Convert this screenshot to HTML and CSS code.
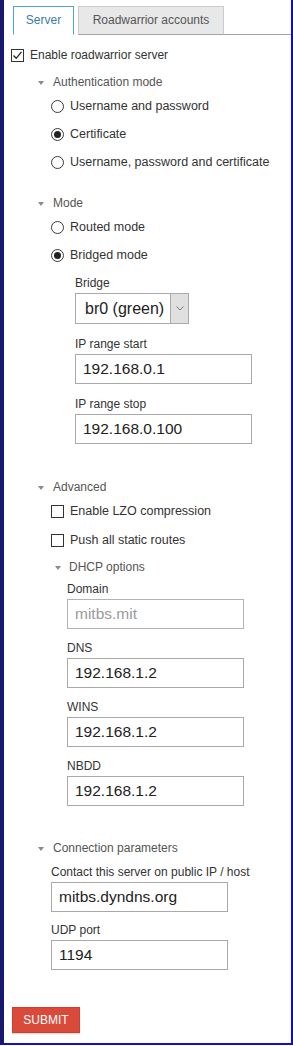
FILE: index.html
```html
<!DOCTYPE html>
<html>
<head>
<meta charset="utf-8">
<link rel="stylesheet" href="styles.css">
</head>
<body>
<div class="frame">
  <div class="tabbar">
    <div class="tab active">Server</div>
    <div class="tab">Roadwarrior accounts</div>
    <div class="tab-fill"></div>
  </div>

  <div class="content">
    <div class="row enable">
      <span class="cb checked"><svg width="11" height="11" viewBox="0 0 11 11"><polyline points="1.5,5.5 4.2,8.3 9.5,1.8" fill="none" stroke="#222" stroke-width="1.3"/></svg></span>
      <span>Enable roadwarrior server</span>
    </div>

    <section class="group g-auth">
      <div class="head"><span class="tri"></span>Authentication mode</div>
      <div class="opts">
        <div class="row opt"><span class="radio"></span>Username and password</div>
        <div class="row opt"><span class="radio on"></span>Certificate</div>
        <div class="row opt"><span class="radio"></span>Username, password and certificate</div>
      </div>
    </section>

    <section class="group g-mode">
      <div class="head"><span class="tri"></span>Mode</div>
      <div class="opts">
        <div class="row opt"><span class="radio"></span>Routed mode</div>
        <div class="row opt"><span class="radio on"></span>Bridged mode</div>
      </div>
      <div class="fields f-bridge">
        <div class="field">
          <div class="lbl">Bridge</div>
          <div class="select">
            <span class="sel-text">br0 (green)</span>
            <span class="sel-arrow"><svg width="8" height="5" viewBox="0 0 8 5"><polyline points="0.5,0.5 4,4 7.5,0.5" fill="none" stroke="#777" stroke-width="1"/></svg></span>
          </div>
        </div>
        <div class="field">
          <div class="lbl">IP range start</div>
          <input class="txt" type="text" value="192.168.0.1">
        </div>
        <div class="field">
          <div class="lbl">IP range stop</div>
          <input class="txt" type="text" value="192.168.0.100">
        </div>
      </div>
    </section>

    <section class="group g-adv">
      <div class="head"><span class="tri"></span>Advanced</div>
      <div class="opts">
        <div class="row opt"><span class="cb"></span>Enable LZO compression</div>
        <div class="row opt"><span class="cb"></span>Push all static routes</div>
      </div>
      <div class="sub g-dhcp">
        <div class="head"><span class="tri"></span>DHCP options</div>
        <div class="fields f-dhcp">
          <div class="field">
            <div class="lbl">Domain</div>
            <input class="txt disabled" type="text" value="mitbs.mit" disabled>
          </div>
          <div class="field">
            <div class="lbl">DNS</div>
            <input class="txt" type="text" value="192.168.1.2">
          </div>
          <div class="field">
            <div class="lbl">WINS</div>
            <input class="txt" type="text" value="192.168.1.2">
          </div>
          <div class="field">
            <div class="lbl">NBDD</div>
            <input class="txt" type="text" value="192.168.1.2">
          </div>
        </div>
      </div>
    </section>

    <section class="group g-conn">
      <div class="head"><span class="tri"></span>Connection parameters</div>
      <div class="fields f-conn">
        <div class="field">
          <div class="lbl">Contact this server on public IP / host</div>
          <input class="txt" type="text" value="mitbs.dyndns.org">
        </div>
        <div class="field">
          <div class="lbl">UDP port</div>
          <input class="txt" type="text" value="1194">
        </div>
      </div>
    </section>

    <button class="submit" type="button">SUBMIT</button>
  </div>
</div>
</body>
</html>
```

FILE: styles.css
```css
html, body {
  margin: 0;
  padding: 0;
  background: #ffffff;
}

body {
  font-family: "Liberation Sans", Arial, sans-serif;
  font-size: 12px;
  color: #333333;
}

.frame {
  width: 293px;
  height: 1045px;
  box-sizing: border-box;
  border-left: 4px solid #18186e;
  border-right: 2px solid #0c0cd2;
  border-bottom: 2px solid #1212c4;
  background: #ffffff;
  overflow: hidden;
}

/* tabs */
.tabbar {
  display: flex;
  align-items: flex-end;
  margin-top: 6px;
  margin-left: 9px;
  height: 29px;
}

.tab {
  box-sizing: border-box;
  height: 29px;
  line-height: 27px;
  font-size: 12px;
  text-align: center;
}

.tab.active {
  width: 61px;
  border: 1px solid #4aa6cc;
  border-bottom: 1px solid #ffffff;
  color: #3d7ca6;
}

.tab:not(.active) {
  width: 146px;
  margin-left: 4px;
  background: #e8e8e8;
  border: 1px solid #cccccc;
  border-bottom: 1px solid #a3a3a3;
  color: #555555;
}

.tab-fill {
  flex: 1;
  height: 29px;
  box-sizing: border-box;
  border-bottom: 1px solid #a3a3a3;
}

/* content */
.content {
  display: flex;
  flex-direction: column;
  align-items: flex-start;
  padding-left: 7px;
}

.row {
  display: flex;
  align-items: center;
  height: 20px;
  line-height: 20px;
  white-space: nowrap;
}

.enable {
  margin-top: 10px;
  gap: 6px;
  font-size: 12px;
}

.cb {
  box-sizing: border-box;
  width: 13px;
  height: 13px;
  border: 1px solid #333333;
  background: #ffffff;
  display: inline-flex;
  align-items: center;
  justify-content: center;
  flex: none;
}

.radio {
  box-sizing: border-box;
  width: 13px;
  height: 13px;
  border: 1px solid #3a3a3a;
  border-radius: 50%;
  background: #ffffff;
  display: inline-flex;
  align-items: center;
  justify-content: center;
  flex: none;
}

.radio.on::after {
  content: "";
  width: 7px;
  height: 7px;
  border-radius: 50%;
  background: #222222;
}

.group {
  display: flex;
  flex-direction: column;
  align-items: flex-start;
}

.head {
  display: flex;
  align-items: center;
  height: 20px;
  line-height: 20px;
  color: #555555;
  font-size: 12px;
  margin-left: 27px;
  white-space: nowrap;
}

.tri {
  width: 0;
  height: 0;
  border-left: 3px solid transparent;
  border-right: 3px solid transparent;
  border-top: 4px solid #8a8a8a;
  margin-right: 9px;
  margin-top: 1px;
}

.opts {
  display: flex;
  flex-direction: column;
  gap: 8px;
  margin-top: 4px;
  margin-left: 40px;
}

.opt {
  gap: 6px;
  font-size: 12.5px;
  color: #333333;
}

.g-auth { margin-top: 7px; }
.g-mode { margin-top: 21px; }
.g-adv { margin-top: 33px; }
.g-conn { margin-top: 32px; }

.g-adv .opts { gap: 9px; }

.fields {
  display: flex;
  flex-direction: column;
  gap: 12px;
}

.f-bridge {
  margin-left: 64px;
  margin-top: 10px;
}

.sub {
  display: flex;
  flex-direction: column;
  align-items: flex-start;
  margin-top: 7px;
}

.sub .head {
  margin-left: 44px;
}

.sub .tri {
  margin-right: 8px;
}

.f-dhcp {
  margin-left: 56px;
  margin-top: 4px;
  gap: 11px;
}

.f-conn {
  margin-left: 40px;
  margin-top: 6px;
  gap: 10px;
}

.field {
  display: flex;
  flex-direction: column;
  align-items: flex-start;
}

.lbl {
  height: 16px;
  line-height: 16px;
  font-size: 12px;
  color: #333333;
  margin-bottom: 2px;
  white-space: nowrap;
}

.txt {
  box-sizing: border-box;
  width: 177px;
  height: 30px;
  margin: 0;
  padding: 0 0 0 7px;
  border: 1px solid #a9a9a9;
  border-radius: 0;
  background: #ffffff;
  font-family: "Liberation Sans", Arial, sans-serif;
  font-size: 15.5px;
  color: #222222;
  outline: none;
}

.txt.disabled {
  color: #9a9a9a;
  background: #ffffff;
  border-color: #b3b3b3;
}

.f-dhcp .txt {
  width: 177px;
}

.select {
  box-sizing: border-box;
  width: 114px;
  height: 31px;
  border: 1px solid #a9a9a9;
  display: flex;
  align-items: stretch;
  background: #ffffff;
}

.sel-text {
  flex: 1;
  display: flex;
  align-items: center;
  padding-left: 9px;
  font-size: 16px;
  color: #222222;
  white-space: nowrap;
}

.sel-arrow {
  width: 17px;
  background: #e0e0e0;
  border-left: 1px solid #a9a9a9;
  display: flex;
  align-items: center;
  justify-content: center;
}

.submit {
  margin-top: 37px;
  margin-left: 1px;
  box-sizing: border-box;
  width: 68px;
  height: 26px;
  padding: 0;
  background: #d94a3b;
  border: 1px solid #c9402f;
  border-radius: 0;
  color: #ffffff;
  font-family: "Liberation Sans", Arial, sans-serif;
  font-size: 12px;
  line-height: 24px;
  text-align: center;
  box-shadow: 0 1px 1px rgba(0,0,0,0.15);
}
```
